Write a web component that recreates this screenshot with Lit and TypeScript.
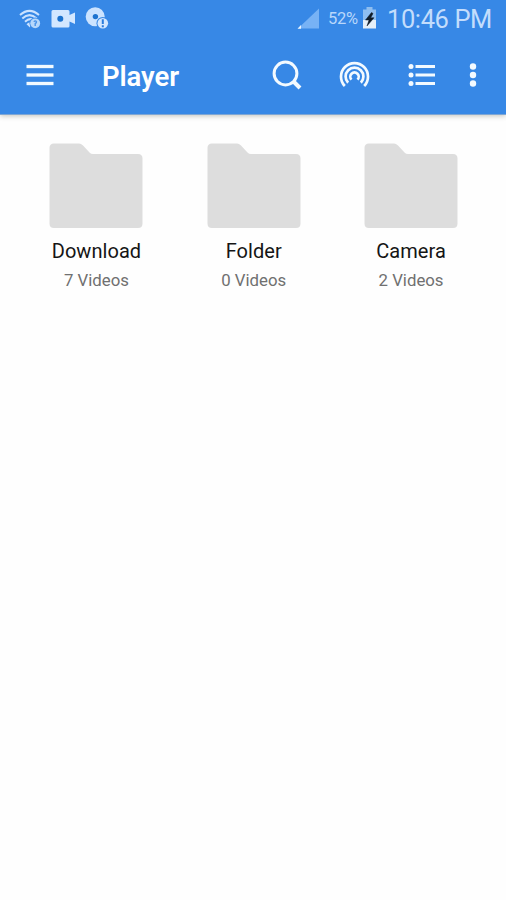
import { LitElement, html, css, svg } from "lit";
import { customElement, property } from "lit/decorators.js";

interface Folder {
  name: string;
  count: number;
}

@customElement("status-bar")
class StatusBar extends LitElement {
  static styles = css`
    :host {
      display: flex;
      align-items: center;
      height: 37px;
      padding-left: 19px;
      padding-right: 15px;
      box-sizing: border-box;
      color: #c3ddfc;
      white-space: nowrap;
    }
    svg { display: block; flex: none; }
    .video { margin-left: 9px; }
    .disc { margin-left: 9px; }
    .space { flex: 1; }
    .percent {
      width: 31px;
      margin-left: 8px;
      font-size: 16.5px;
      letter-spacing: -0.3px;
      line-height: 37px;
      color: #b9d7fb;
    }
    .battery { margin-left: 3px; margin-right: 1px; }
    .time {
      width: 104px;
      margin-left: 9px;
      font-size: 25.5px;
      line-height: 38px;
      padding-top: 1px;
      letter-spacing: -0.4px;
      font-weight: 400;
    }
  `;

  render() {
    return html`
      <svg width="23" height="24" viewBox="0 0 23 24">
        <g fill="none" stroke="#cbe2ff" stroke-width="2">
          <path d="M1 8 Q10.500 -0.200 20 8" />
          <path d="M3.300 11.500 Q10.500 4.800 17.700 11.500" />
          <path d="M6 14.700 Q10.500 10.600 14 13" />
        </g>
        <path d="M7.500 17.200 Q10 14.500 11.500 16 L11 20.500 Z" fill="#cbe2ff" />
        <circle cx="16.200" cy="16.300" r="5.700" fill="#3788e6" />
        <circle cx="16.200" cy="16.300" r="4.900" fill="#b6d7fb" />
        <path d="M14.800 14.700 Q16.500 13 17.500 14.800 Q17.600 16 16.200 16.600 V19" fill="none" stroke="#4b94e9" stroke-width="1.400" />
      </svg>
      <svg class="video" width="25" height="24" viewBox="0 0 25 24">
        <path d="M2 3 H17 Q18.500 3 18.500 4.500 V8 L24 5.500 V17 L18.500 14.500 V19 Q18.500 20.500 17 20.500 H2 Q0.500 20.500 0.500 19 V4.500 Q0.500 3 2 3 Z" fill="#d3e7ff" />
        <circle cx="9.300" cy="11.700" r="3" fill="#1d73cf" />
      </svg>
      <svg class="disc" width="24" height="26" viewBox="0 0 24 26">
        <circle cx="10.200" cy="10.800" r="9.500" fill="#cbe3ff" />
        <circle cx="10.400" cy="10.600" r="2.700" fill="#1d73cf" />
        <circle cx="17.800" cy="17.300" r="6.300" fill="#3788e6" />
        <circle cx="17.800" cy="17.300" r="5.300" fill="#d3e7ff" />
        <path d="M17.800 13.300 V18 M17.800 19.300 V21.300" fill="none" stroke="#2a7cdc" stroke-width="2" />
      </svg>
      <span class="space"></span>
      <svg width="24" height="24" viewBox="0 0 24 24">
        <path d="M2 21.500 L23 1.500 V21.500 Z" fill="#77b2f5" />
        <path d="M1.500 21.700 L5 18 V21.700 Z" fill="#e6f3ff" />
      </svg>
      <span class="percent">52%</span>
      <svg class="battery" width="15" height="24" viewBox="0 0 15 24">
        <path d="M4.500 0 H10.500 V2.500 H14 V13 H1 V2.500 H4.500 Z" fill="#8fbef0" />
        <path d="M1 13 H14 V21.500 H1 Z" fill="#e6f0f8" />
        <path d="M9.500 5.500 L3.500 13 H7 L5 19 L12 10.800 H8.700 L11 6.500 Z" fill="#101c28" stroke="#101c28" stroke-width="0.500" />
      </svg>
      <span class="time">10:46 PM</span>
    `;
  }
}

@customElement("tool-bar")
class ToolBar extends LitElement {
  static styles = css`
    :host {
      display: flex;
      align-items: center;
      height: 77px;
      padding-left: 20px;
      padding-right: 23px;
      padding-bottom: 1px;
      box-sizing: border-box;
      color: #fff;
    }
    svg {
      display: block;
      flex: none;
      fill: none;
      stroke: #f3faff;
    }
    .dots { fill: #f3faff; stroke: none; }
    h1 {
      flex: 1;
      margin: 2px 0 0 42px;
      font-size: 27.500px;
      line-height: 73px;
      font-weight: 600;
      letter-spacing: -0.1px;
    }
    .actions {
      display: flex;
      gap: 27.500px;
    }
    .more { margin-left: 21px; }
  `;

  render() {
    const rows = [11.5, 20, 28.5];
    return html`
      <svg width="40" height="40" viewBox="0 0 40 40">
        ${rows.map((y) => svg`<path d="M6.500 ${y} H33.500" stroke-width="3.300" />`)}
      </svg>
      <h1>Player</h1>
      <div class="actions">
        <svg width="40" height="40" viewBox="0 0 40 40">
          <circle cx="18.500" cy="18.500" r="11.400" stroke-width="3" />
          <path d="M26.500 26.500 L33 33" stroke-width="4" />
        </svg>
        <svg width="40" height="40" viewBox="0 0 40 40" stroke-width="2.700">
          <path d="M9.800 31 A13.500 13.500 0 1 1 29.200 31" />
          <path d="M13.100 27.800 A8.900 8.900 0 1 1 25.900 27.800" />
          <path d="M16.500 24.600 A4.200 4.200 0 1 1 22.500 24.600" />
        </svg>
        <svg width="40" height="40" viewBox="0 0 40 40">
          ${rows.map(
            (y) => svg`
              <circle class="dots" cx="9" cy=${y} r="2.500" />
              <path d="M13.500 ${y} H33" stroke-width="3" />`
          )}
        </svg>
      </div>
      <svg class="more" width="20" height="40" viewBox="0 0 20 40">
        ${rows.map((y) => svg`<circle class="dots" cx="10" cy=${y} r="3.200" />`)}
      </svg>
    `;
  }
}

@customElement("folder-tile")
class FolderTile extends LitElement {
  @property() name = "";
  @property({ type: Number }) count = 0;

  static styles = css`
    :host {
      display: flex;
      flex-direction: column;
      align-items: center;
      white-space: nowrap;
    }
    svg { display: block; }
    .name {
      margin-top: 9px;
      font-size: 20px;
      line-height: 26px;
      letter-spacing: 0.05px;
      color: #151515;
    }
    .count {
      margin-top: 4px;
      font-size: 16.8px;
      line-height: 24px;
      color: #707070;
    }
  `;

  render() {
    return html`
      <svg width="94" height="86" viewBox="0 0 94 86">
        <path
          d="M5 0.500 H30 Q32 0.500 34 2.500 L40.500 9.500 Q42 11 44 11 H89 Q93.500 11 93.500 15.500 V80.500 Q93.500 85 89 85 H5 Q0.500 85 0.500 80.500 V5 Q0.500 0.500 5 0.500 Z"
          fill="#dddddd"
        />
      </svg>
      <span class="name">${this.name}</span>
      <span class="count">${this.count} Videos</span>
    `;
  }
}

@customElement("app-root")
class AppRoot extends LitElement {
  private folders: Folder[] = [
    { name: "Download", count: 7 },
    { name: "Folder", count: 0 },
    { name: "Camera", count: 2 },
  ];

  static styles = css`
    :host {
      display: block;
      height: 900px;
      overflow: hidden;
      background: #fefefe;
      font-family: Roboto, "Liberation Sans", sans-serif;
    }
    header {
      background: #3788e6;
      border-bottom: 1px solid #7ea6d4;
      box-shadow: 0 1px 5px rgba(60, 60, 40, 0.3);
    }
    main {
      display: grid;
      grid-template-columns: repeat(3, 157.300px);
      justify-content: center;
      padding-top: 28px;
      padding-left: 1.500px;
    }
  `;

  render() {
    return html`
      <header>
        <status-bar></status-bar>
        <tool-bar></tool-bar>
      </header>
      <main>
        ${this.folders.map(
          (f) => html`<folder-tile .name=${f.name} .count=${f.count}></folder-tile>`
        )}
      </main>
    `;
  }
}
